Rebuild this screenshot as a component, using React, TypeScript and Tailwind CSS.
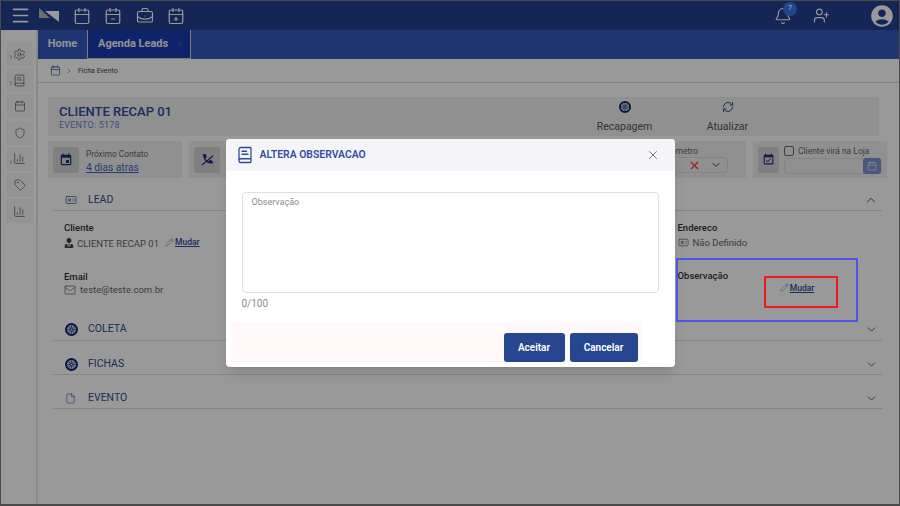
import React from "react";
import { Menu, Calendar, CalendarMinus2, BriefcaseBusiness, CalendarPlus2, Bell, UserPlus, Settings, BookText, Shield, ChartColumn, Tag, ChevronRight, ChevronUp, ChevronDown, RefreshCw, X, Pencil, Mail, File, IdCard } from "lucide-react";
import { MdAccountCircle, MdEvent, MdEventAvailable } from "react-icons/md";
import { FaUserTie } from "react-icons/fa";

function Tire({ size = 12, hub = "#b9c3dc" }: { size?: number; hub?: string }) {
  return (
    <svg width={size} height={size} viewBox="0 0 24 24" className="shrink-0">
      <circle cx="12" cy="12" r="10" fill="none" stroke="#10266f" strokeWidth="4" />
      <circle cx="12" cy="12" r="7.6" fill={hub} />
      <circle cx="12" cy="12" r="2.4" fill="none" stroke="#10266f" strokeWidth="1.2" />
      <path d="M12 4.5v5M12 14.5v5M4.5 12h5M14.5 12h5M6.7 6.7l3.5 3.5M13.8 13.8l3.5 3.5M17.3 6.7l-3.5 3.5M10.2 13.8l-3.5 3.5" stroke="#10266f" strokeWidth="1.2" />
    </svg>
  );
}

function PhoneSlash() {
  return (
    <svg width="15" height="15" viewBox="0 0 24 24" className="shrink-0">
      <path d="M5 3 l4 0 l2 5 l-2.5 2 c1 2.5 2.5 4 5 5 l2 -2.5 l5 2 l0 4 c-9 1 -16 -6 -15.5 -15.5z" fill="#17307c" />
      <path d="M3 21 L21 6" stroke="#17307c" strokeWidth="2" />
    </svg>
  );
}

function SideItem({ children, arrow }: { children: React.ReactNode; arrow?: boolean }) {
  return (
    <div className="relative flex h-[24px] w-[26px] items-center justify-center rounded-[2px] bg-[#f7f7f7] text-[#33415f]">
      {arrow && <ChevronRight size={6} strokeWidth={2} className="absolute left-[1px] top-[12px]" />}
      {children}
    </div>
  );
}

function InfoCard({ icon, children }: { icon?: React.ReactNode; children?: React.ReactNode }) {
  return (
    <div className="flex h-[37px] items-center gap-[6px] bg-[#f0f0f1] px-[5px]">
      <div className="flex h-[26px] w-[26px] shrink-0 items-center justify-center rounded-[2px] bg-[#d5d5d8] text-[#1d3a8f]">{icon}</div>
      <div className="min-w-0 flex-1">{children}</div>
    </div>
  );
}

function Accordion({ icon, label, h, up }: { icon: React.ReactNode; label: string; h: string; up?: boolean }) {
  return (
    <div className={`flex ${h} items-center border-b border-[#dcdcdc] pl-[12px] pr-[4px]`}>
      <div className="flex w-[23px] justify-start">{icon}</div>
      <span className="text-[10.5px] text-[#33498f]">{label}</span>
      <div className="ml-auto text-[#3b4660]">{up ? <ChevronUp size={14} strokeWidth={1.6} /> : <ChevronDown size={13} strokeWidth={1.6} />}</div>
    </div>
  );
}

function Mudar() {
  return (
    <span className="inline-flex items-center gap-[1px] text-[8.5px] font-medium text-[#2f4a9e]">
      <Pencil size={9} strokeWidth={1.2} className="text-[#5a6aa0]" />
      <span className="underline">Mudar</span>
    </span>
  );
}

export default function App() {
  return (
    <div className="relative flex h-[506px] w-[900px] flex-col overflow-hidden border border-b-2 border-[#4a4a4a] bg-white font-['Roboto',sans-serif]">
      <header className="flex h-[29px] shrink-0 items-center bg-[#223f8f] text-[#ffffff]">
        <Menu size={21} strokeWidth={1.9} className="ml-[9px]" />
        <svg width="21" height="14" viewBox="0 0 21 14" className="ml-[8px] -mt-[1px]">
          <path d="M0 0 L11 10 L0 10 Z" fill="#b8b8b8" />
          <path d="M6 3 H20 V14 Z" fill="#ffffff" />
        </svg>
        <Calendar size={18} strokeWidth={1.6} className="ml-[13px]" />
        <CalendarMinus2 size={18} strokeWidth={1.6} className="ml-[13px]" />
        <BriefcaseBusiness size={18} strokeWidth={1.6} className="ml-[14px]" />
        <CalendarPlus2 size={18} strokeWidth={1.6} className="ml-[13px]" />
        <div className="relative ml-auto">
          <Bell size={18} strokeWidth={1.6} />
          <span className="absolute left-[9px] top-[-5px] flex h-[14px] w-[14px] items-center justify-center rounded-full bg-[#3877e8] text-[7px] font-medium text-white">7</span>
        </div>
        <UserPlus size={17} strokeWidth={1.6} className="ml-[21px]" />
        <MdAccountCircle size={26} className="ml-[39px] mr-[4px]" />
      </header>

      <div className="flex min-h-0 flex-1">
        <aside className="flex w-[37px] shrink-0 flex-col items-center gap-[2.2px] border-r-2 border-[#e6e6e6] bg-white pl-[2px] pt-[12px]">
          <SideItem arrow><Settings size={13} strokeWidth={1.2} /></SideItem>
          <SideItem arrow><BookText size={13} strokeWidth={1.2} /></SideItem>
          <SideItem><Calendar size={12} strokeWidth={1.2} /></SideItem>
          <SideItem><Shield size={12} strokeWidth={1.2} /></SideItem>
          <SideItem arrow><ChartColumn size={13} strokeWidth={1.2} /></SideItem>
          <SideItem><Tag size={12} strokeWidth={1.2} /></SideItem>
          <SideItem><ChartColumn size={13} strokeWidth={1.2} /></SideItem>
        </aside>

        <main className="flex min-w-0 flex-1 flex-col">
          <nav className="flex h-[29px] shrink-0 items-stretch bg-[#3459bf] text-[11px] font-bold text-[#f4f4f4]">
            <div className="flex w-[49px] items-center justify-center">Home</div>
            <div className="flex w-[104px] items-center gap-[9px] border-l border-r border-b border-[#d0d0d0] bg-[#183bb0] pl-[10px]">
              Agenda Leads
              <X size={6} className="text-[#5a78d8]" />
            </div>
          </nav>

          <div className="flex h-[24px] shrink-0 items-center border-b border-[#d8d8d8] pl-[12px] pt-[1px] text-[#22397f]">
            <Calendar size={11} strokeWidth={1.4} className="-mt-[2px]" />
            <ChevronRight size={8} strokeWidth={1.6} className="ml-[4px] text-[#444]" />
            <span className="ml-[5px] text-[7px] text-[#444]">Ficha Evento</span>
          </div>

          <div className="pl-[10px] pr-[10px] pt-[14px]">
            <div className="flex h-[39px] w-[831px] items-center bg-[#f0f0f1] pl-[11px]">
              <div className="flex w-[112px] flex-col">
                <span className="whitespace-nowrap text-[13px] leading-[16px] font-medium text-[#2a4aa5]">CLIENTE RECAP 01</span>
                <span className="text-[9px] leading-[10px] tracking-[0.2px] text-[#6c85c8]">EVENTO: 5178</span>
              </div>
              <div className="ml-[408px] flex w-[91px] flex-col items-center gap-[8px] pt-[1px]">
                <Tire size={12} />
                <span className="text-[10.5px] leading-[12px] text-[#555]">Recapagem</span>
              </div>
              <div className="ml-[12px] flex w-[91px] flex-col items-center gap-[8px] pt-[1px]">
                <RefreshCw size={12} strokeWidth={1.8} className="text-[#22397f]" />
                <span className="text-[10.5px] leading-[12px] text-[#555]">Atualizar</span>
              </div>
            </div>

            <div className="mt-[5px] grid w-[839px] grid-cols-6 gap-[7px]">
              <InfoCard icon={<MdEvent size={14} className="text-[#17307c]" />}>
                <div className="ml-[1px] mt-[4px] text-[8.3px] leading-[11px] text-[#666]">Próximo Contato</div>
                <div className="ml-[1px] mt-[1px] text-[10.2px] leading-[13px] text-[#3f62c4] underline">4 dias atras</div>
              </InfoCard>
              <InfoCard icon={<PhoneSlash />} />
              <InfoCard />
              <InfoCard />
              <div className="flex h-[37px] flex-col justify-center bg-[#f0f0f1] pl-[6px]">
                <div className="pl-[37px] text-[8.5px] leading-[11px] text-[#666]">Hodometro</div>
                <div className="flex h-[16px] w-[110px] items-center justify-end gap-[9px] rounded-[4px] border border-[#dcdcdc] pr-[5px]">
                  <X size={13} strokeWidth={2} className="text-[#ff2a2a]" />
                  <ChevronDown size={12} strokeWidth={2} className="text-[#1d3a8f]" />
                </div>
              </div>
              <div className="flex h-[37px] items-center gap-[5px] bg-[#f0f0f1] pl-[5px] pr-[5px]">
                <div className="flex h-[26px] w-[21px] shrink-0 items-center justify-center rounded-[2px] bg-[#d5d5d8]"><MdEventAvailable size={13} className="text-[#17307c]" /></div>
                <div className="min-w-0 flex-1">
                  <div className="flex items-center gap-[4px]">
                    <span className="h-[10px] w-[10px] rounded-[2px] border border-[#666]" />
                    <span className="text-[8.5px] leading-[11px] text-[#666]">Cliente virá na Loja</span>
                  </div>
                  <div className="mt-[1px] flex h-[16px] items-center justify-end rounded-[4px] border border-[#dcdcdc]">
                    <span className="flex h-[16px] w-[18px] items-center justify-center rounded-[3px] bg-[#7d92cf] text-white"><Calendar size={10} strokeWidth={1.4} /></span>
                  </div>
                </div>
              </div>
            </div>

            <div className="ml-[5px] w-[829px]">
              <Accordion h="h-[33px] pt-[11px]" up label="LEAD" icon={<IdCard size={12} strokeWidth={1.3} className="text-[#22397f]" />} />
              <div className="grid h-[96px] grid-cols-4 pl-[11px]">
                <div className="pt-[11px]">
                  <div className="text-[9.5px] font-medium leading-[12px] text-[#333]">Cliente</div>
                  <div className="mt-[2px] flex items-center gap-[3px] text-[9.5px] leading-[13px] text-[#666]">
                    <FaUserTie size={10} className="text-[#444]" />
                    CLIENTE RECAP 01
                    <span className="ml-[3px]"><Mudar /></span>
                  </div>
                  <div className="mt-[21px] text-[9.5px] font-medium leading-[12px] text-[#333]">Email</div>
                  <div className="flex items-center gap-[4px] text-[9.5px] leading-[13px] text-[#666]">
                    <Mail size={12} strokeWidth={1.2} className="text-[#444]" />
                    teste@teste.com.br
                  </div>
                </div>
                <div />
                <div />
                <div className="relative -ml-[2px] pt-[11px] pl-[2px]">
                  <div className="text-[9.5px] font-medium leading-[12px] text-[#333]">Endereco</div>
                  <div className="mt-[2px] flex items-center gap-[4px] text-[9.5px] leading-[13px] text-[#666]">
                    <IdCard size={11} strokeWidth={1.2} className="text-[#444]" />
                    Não Definido
                  </div>
                  <div className="mt-[21px] text-[9.5px] font-medium leading-[12px] text-[#333]">Observação</div>
                  <div className="absolute left-[88px] top-[65px] flex h-[31px] w-[73px] justify-center pr-[6px] pt-[5px]"><span className="leading-[12px]"><Mudar /></span></div>
                </div>
              </div>
              <Accordion h="h-[34px] pt-[11px]" label="COLETA" icon={<Tire size={13} />} />
              <Accordion h="h-[34px] pt-[13px]" label="FICHAS" icon={<Tire size={13} />} />
              <Accordion h="h-[34px] pt-[13px]" label="EVENTO" icon={<File size={11} strokeWidth={1.4} className="text-[#3a5aa8]" />} />
            </div>
          </div>
        </main>
      </div>

      <div className="absolute inset-0 flex items-center justify-center bg-black/40">
        <div className="flex h-[228px] w-[449px] flex-col overflow-hidden rounded-[4px] bg-white shadow-lg">
          <div className="flex h-[32px] shrink-0 items-center bg-[#f5f5f9] pl-[10px] pr-[15px]">
            <BookText size={18} strokeWidth={1.7} className="text-[#2b4a9b]" />
            <span className="ml-[6px] text-[10.4px] font-semibold text-[#2f4d9f]">ALTERA OBSERVACAO</span>
            <X size={14} strokeWidth={1.3} className="ml-auto text-[#555]" />
          </div>
          <div className="px-[16px] pt-[21px]">
            <div className="h-[101px] rounded-[4px] border border-[#e0e0e0] px-[9px] py-[3px] text-[9px] text-[#8c8c8c]">Observação</div>
            <div className="mt-[5px] text-[10px] leading-[12px] text-[#8a8a8a]">0/100</div>
          </div>
          <div className="mx-[5px] mt-[12px] flex h-[40px] w-[412px] items-start justify-end gap-[5px] bg-[#fff8f8] pt-[11px] pr-[5px]">
            <button className="flex h-[29px] w-[61px] items-center justify-center rounded-[3px] bg-[#26468f] text-[10px] font-semibold text-white">Aceitar</button>
            <button className="flex h-[29px] w-[68px] items-center justify-center rounded-[3px] bg-[#26468f] text-[10px] font-semibold text-white">Cancelar</button>
          </div>
        </div>
      </div>

      <div className="absolute left-[675px] top-[257px] h-[64px] w-[182px] border-2 border-[#4f55e6]" />
      <div className="absolute left-[763px] top-[275px] h-[32px] w-[74px] border-2 border-[#f01c1c]" />
    </div>
  );
}
